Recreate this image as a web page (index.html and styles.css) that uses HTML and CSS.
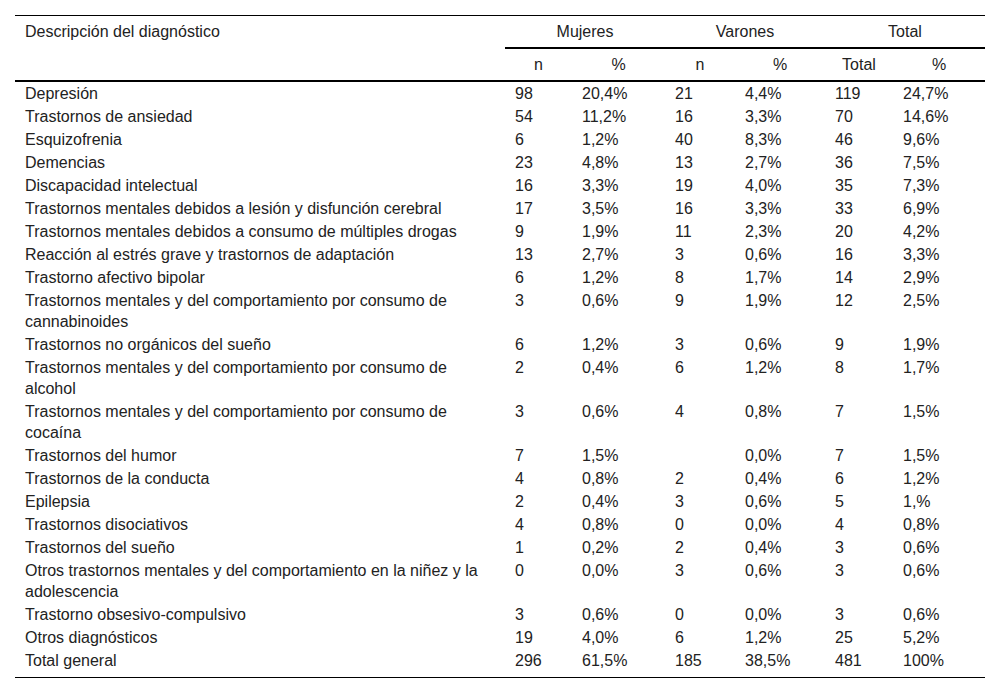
FILE: index.html
```html
<!DOCTYPE html>
<html lang="es">
<head>
<meta charset="utf-8">
<link rel="stylesheet" href="styles.css">
</head>
<body>
<table class="tbl">
  <colgroup>
    <col class="c-desc"><col class="c1"><col class="c2"><col class="c3"><col class="c4"><col class="c5"><col class="c6">
  </colgroup>
  <thead>
    <tr class="h1">
      <th rowspan="2" class="desc">Descripción del diagnóstico</th>
      <th colspan="2" class="grp">Mujeres</th>
      <th colspan="2" class="grp">Varones</th>
      <th colspan="2" class="grp">Total</th>
    </tr>
    <tr class="h2">
      <th>n</th><th>%</th><th>n</th><th>%</th><th>Total</th><th>%</th>
    </tr>
  </thead>
  <tbody>
    <tr><td>Depresión</td><td>98</td><td>20,4%</td><td>21</td><td>4,4%</td><td>119</td><td>24,7%</td></tr>
    <tr><td>Trastornos de ansiedad</td><td>54</td><td>11,2%</td><td>16</td><td>3,3%</td><td>70</td><td>14,6%</td></tr>
    <tr><td>Esquizofrenia</td><td>6</td><td>1,2%</td><td>40</td><td>8,3%</td><td>46</td><td>9,6%</td></tr>
    <tr><td>Demencias</td><td>23</td><td>4,8%</td><td>13</td><td>2,7%</td><td>36</td><td>7,5%</td></tr>
    <tr><td>Discapacidad intelectual</td><td>16</td><td>3,3%</td><td>19</td><td>4,0%</td><td>35</td><td>7,3%</td></tr>
    <tr><td>Trastornos mentales debidos a lesión y disfunción cerebral</td><td>17</td><td>3,5%</td><td>16</td><td>3,3%</td><td>33</td><td>6,9%</td></tr>
    <tr><td>Trastornos mentales debidos a consumo de múltiples drogas</td><td>9</td><td>1,9%</td><td>11</td><td>2,3%</td><td>20</td><td>4,2%</td></tr>
    <tr><td>Reacción al estrés grave y trastornos de adaptación</td><td>13</td><td>2,7%</td><td>3</td><td>0,6%</td><td>16</td><td>3,3%</td></tr>
    <tr><td>Trastorno afectivo bipolar</td><td>6</td><td>1,2%</td><td>8</td><td>1,7%</td><td>14</td><td>2,9%</td></tr>
    <tr><td>Trastornos mentales y del comportamiento por consumo de cannabinoides</td><td>3</td><td>0,6%</td><td>9</td><td>1,9%</td><td>12</td><td>2,5%</td></tr>
    <tr><td>Trastornos no orgánicos del sueño</td><td>6</td><td>1,2%</td><td>3</td><td>0,6%</td><td>9</td><td>1,9%</td></tr>
    <tr><td>Trastornos mentales y del comportamiento por consumo de alcohol</td><td>2</td><td>0,4%</td><td>6</td><td>1,2%</td><td>8</td><td>1,7%</td></tr>
    <tr><td>Trastornos mentales y del comportamiento por consumo de cocaína</td><td>3</td><td>0,6%</td><td>4</td><td>0,8%</td><td>7</td><td>1,5%</td></tr>
    <tr><td>Trastornos del humor</td><td>7</td><td>1,5%</td><td></td><td>0,0%</td><td>7</td><td>1,5%</td></tr>
    <tr><td>Trastornos de la conducta</td><td>4</td><td>0,8%</td><td>2</td><td>0,4%</td><td>6</td><td>1,2%</td></tr>
    <tr><td>Epilepsia</td><td>2</td><td>0,4%</td><td>3</td><td>0,6%</td><td>5</td><td>1,%</td></tr>
    <tr><td>Trastornos disociativos</td><td>4</td><td>0,8%</td><td>0</td><td>0,0%</td><td>4</td><td>0,8%</td></tr>
    <tr><td>Trastornos del sueño</td><td>1</td><td>0,2%</td><td>2</td><td>0,4%</td><td>3</td><td>0,6%</td></tr>
    <tr><td>Otros trastornos mentales y del comportamiento en la niñez y la adolescencia</td><td>0</td><td>0,0%</td><td>3</td><td>0,6%</td><td>3</td><td>0,6%</td></tr>
    <tr><td>Trastorno obsesivo-compulsivo</td><td>3</td><td>0,6%</td><td>0</td><td>0,0%</td><td>3</td><td>0,6%</td></tr>
    <tr><td>Otros diagnósticos</td><td>19</td><td>4,0%</td><td>6</td><td>1,2%</td><td>25</td><td>5,2%</td></tr>
    <tr class="last"><td>Total general</td><td>296</td><td>61,5%</td><td>185</td><td>38,5%</td><td>481</td><td>100%</td></tr>
  </tbody>
</table>
</body>
</html>
```
FILE: styles.css
```css
html, body {
  margin: 0;
  padding: 0;
  background: #fff;
}
body {
  padding: 15px 15px 0 15px;
  font-family: "Liberation Sans", Arial, sans-serif;
  font-size: 16px;
  color: #222;
}
.tbl {
  width: 970px;
  border-collapse: collapse;
  table-layout: fixed;
  border-top: 1px solid #000;
  border-bottom: 1px solid #000;
}
.c-desc { width: 490px; }
.c1 { width: 67px; }
.c2 { width: 93px; }
.c3 { width: 70px; }
.c4 { width: 90px; }
.c5 { width: 68px; }
.c6 { width: 92px; }
.tbl th {
  font-weight: normal;
  line-height: 21px;
  padding: 5px 10px;
  text-align: center;
  vertical-align: top;
}
.tbl th.desc {
  text-align: left;
  border-bottom: 2px solid #000;
}
.tbl th.grp {
  border-bottom: 2px solid #000;
}
.tbl .h2 th {
  border-bottom: 2px solid #000;
}
.tbl td {
  line-height: 21px;
  padding: 1px 10px;
  text-align: left;
  vertical-align: top;
}
.tbl tr.last td {
  padding-bottom: 6px;
}
```
